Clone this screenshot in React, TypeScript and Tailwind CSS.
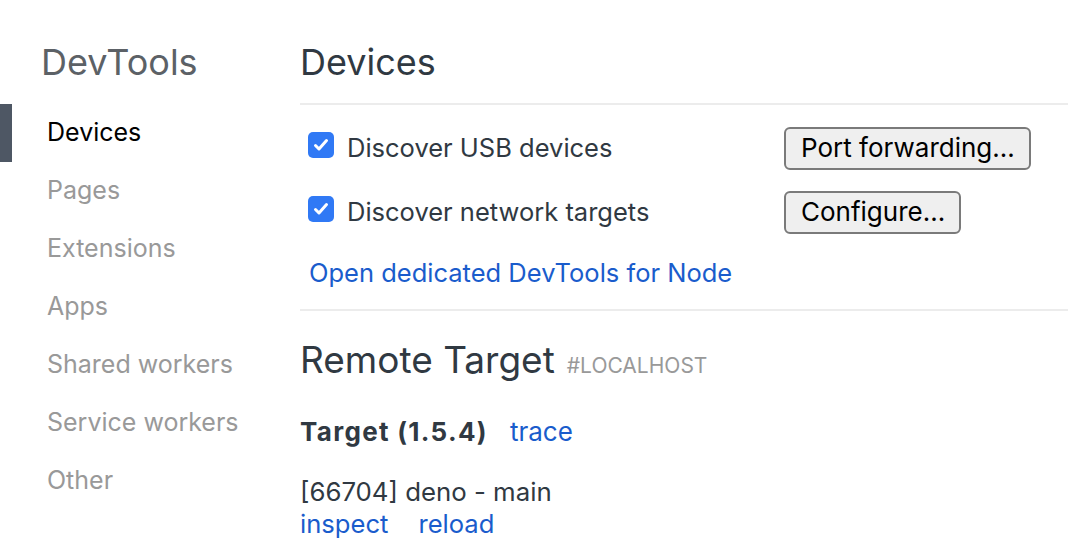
import React from 'react';

const navItems = ['Devices', 'Pages', 'Extensions', 'Apps', 'Shared workers', 'Service workers', 'Other'];

function Check() {
  return (
    <div className="w-[26px] h-[26px] rounded-[5px] bg-[#3079f5] flex items-center justify-center shrink-0 -mt-[6px]">
      <svg width="20" height="20" viewBox="0 0 20 20" fill="none">
        <path d="M4.5 10.5l3.5 3.5L15.5 5.5" stroke="white" strokeWidth="3" strokeLinecap="round" strokeLinejoin="round" />
      </svg>
    </div>
  );
}

function Row({ label, button, width }: { label: string; button: string; width: string }) {
  return (
    <div className="h-[64px] flex items-center pl-[8px]">
      <div className="w-[476px] flex items-center gap-[13px]">
        <Check />
        <span className="text-[25.5px] leading-[32px]">{label}</span>
      </div>
      <button className={`${width} h-[43px] border-2 border-[#7a7a7a] rounded-[6px] bg-[#efefef] text-left pl-[15px] text-[26px] leading-[32px] text-black`}>
        {button}
      </button>
    </div>
  );
}

export default function App() {
  return (
    <div className="flex w-[1068px] h-[558px] bg-white overflow-hidden text-[#303942]" style={{ fontFamily: 'Inter, "Noto Sans", sans-serif' }}>
      <aside className="w-[300px] shrink-0">
        <h1 className="pt-[40px] h-[104px] pl-[41px] text-[36px] leading-[44px] text-[#5c6166]">DevTools</h1>
        <nav>
          {navItems.map((item, i) => (
            <div
              key={item}
              className={`h-[58px] flex items-center text-[25px] ${i === 0 ? 'border-l-[12px] border-[#4e5764] pl-[35px] text-black' : 'pl-[47px] text-[#999999]'}`}
            >
              {item}
            </div>
          ))}
        </nav>
      </aside>

      <main className="flex-1">
        <div className="h-[105px] pt-[40px] border-b-2 border-[#ececec]">
          <h1 className="text-[36px] leading-[44px]">Devices</h1>
        </div>

        <section className="pt-[11px] pb-[20px] border-b-2 border-[#ececec]">
          <Row label="Discover USB devices" button="Port forwarding..." width="w-[247px]" />
          <Row label="Discover network targets" button="Configure..." width="w-[177px]" />
          <a className="block mt-[13px] ml-[9px] text-[25.5px] leading-[32px] text-[#1a5ccc]">Open dedicated DevTools for Node</a>
        </section>

        <section className="pt-[27px]">
          <div className="flex items-baseline gap-[12px] h-[44px]">
            <h2 className="text-[37px] leading-[44px]">Remote Target</h2>
            <span className="text-[21px] text-[#999999]">#LOCALHOST</span>
          </div>
          <div className="mt-[34px] flex items-baseline gap-[22px] leading-[32px]">
            <span className="font-bold text-[26px] tracking-[1.3px]">Target (1.5.4)</span>
            <a className="text-[26px] text-[#1a5ccc]">trace</a>
          </div>
          <div className="mt-[28px] text-[25.8px] leading-[32px]">[66704] deno - main</div>
          <div className="flex gap-[30px] text-[25.6px] leading-[32px] text-[#1a5ccc]">
            <a>inspect</a>
            <a>reload</a>
          </div>
        </section>
      </main>
    </div>
  );
}
